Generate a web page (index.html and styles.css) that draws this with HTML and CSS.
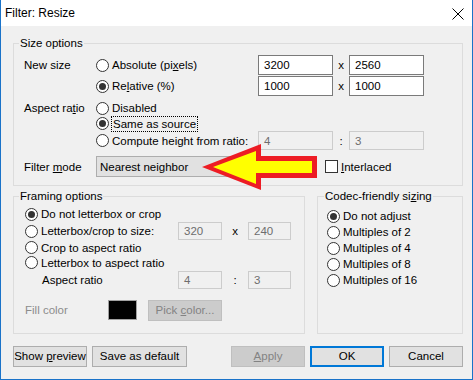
FILE: index.html
```html
<!DOCTYPE html>
<html lang="en">
<head>
<meta charset="utf-8">
<title>Filter: Resize</title>
<link rel="stylesheet" href="styles.css">
</head>
<body>
<div class="window">
  <div class="titlebar">
    <span class="title">Filter: Resize</span>
    <svg class="close" width="12" height="12" viewBox="0 0 12 12"><path d="M0.5 0.5L11.5 11.5M11.5 0.5L0.5 11.5" stroke="#000" stroke-width="1" fill="none"/></svg>
  </div>
  <div class="content">
    <div class="group size">
      <div class="group-title">Size options</div>
      <div class="rows">
        <div class="row r1">
          <span class="label">New size</span>
          <span class="opt"><span class="radio"></span><span>Absolute (pi<u>x</u>els)</span></span>
          <span class="field">3200</span><span class="sep">x</span><span class="field">2560</span>
        </div>
        <div class="row r2">
          <span class="label"></span>
          <span class="opt"><span class="radio on"></span><span>Re<u>l</u>ative (%)</span></span>
          <span class="field">1000</span><span class="sep">x</span><span class="field">1000</span>
        </div>
        <div class="row r3">
          <span class="label">Aspect ra<u>t</u>io</span>
          <span class="opt"><span class="radio"></span><span>Disabled</span></span>
        </div>
        <div class="row r4">
          <span class="label"></span>
          <span class="opt"><span class="radio on"></span><span class="focus">Same as source</span></span>
        </div>
        <div class="row r5">
          <span class="label"></span>
          <span class="opt"><span class="radio"></span><span>Compute height from ratio:</span></span>
          <span class="field off">4</span><span class="sep">:</span><span class="field off">3</span>
        </div>
        <div class="row r6">
          <span class="label">Filter <u>m</u>ode</span>
          <span class="select">Nearest neighbor</span>
          <span class="check"></span><span><u>I</u>nterlaced</span>
        </div>
      </div>
    </div>

    <div class="lower">
      <div class="group framing">
        <div class="group-title">Framing options</div>
        <div class="rows">
          <div class="row f1"><span class="opt"><span class="radio on"></span><span>Do not letterbox or crop</span></span></div>
          <div class="row f2">
            <span class="opt"><span class="radio"></span><span>Letterbox/crop to size:</span></span>
            <span class="field off w44">320</span><span class="sep wide">x</span><span class="field off w43">240</span>
          </div>
          <div class="row f3"><span class="opt"><span class="radio"></span><span>Crop to aspect ratio</span></span></div>
          <div class="row f4"><span class="opt"><span class="radio"></span><span>Letterbox to aspect ratio</span></span></div>
          <div class="row f5">
            <span class="opt sub">Aspect ratio</span>
            <span class="field off w44">4</span><span class="sep wide">:</span><span class="field off w43">3</span>
          </div>
          <div class="row f6">
            <span class="fill-label">Fill color</span>
            <span class="swatch"></span>
            <span class="btn off pick">Pick <u>c</u>olor...</span>
          </div>
        </div>
      </div>
      <div class="group codec">
        <div class="group-title">Codec-friendly si<u>z</u>ing</div>
        <div class="rows">
          <div class="row c"><span class="radio on"></span><span>Do not adjust</span></div>
          <div class="row c"><span class="radio"></span><span>Multiples of 2</span></div>
          <div class="row c"><span class="radio"></span><span>Multiples of 4</span></div>
          <div class="row c"><span class="radio"></span><span>Multiples of 8</span></div>
          <div class="row c"><span class="radio"></span><span>Multiples of 16</span></div>
        </div>
      </div>
    </div>

    <div class="buttons">
      <span class="btn">Show <u>p</u>review</span>
      <span class="btn wide">Save as default</span>
      <span class="btn off apply"><u>A</u>pply</span>
      <span class="btn default">OK</span>
      <span class="btn">Cancel</span>
    </div>
  </div>

  <svg class="arrow" width="473" height="380" viewBox="0 0 473 380">
    <polygon points="202,167 261,144 261,156 317,156 317,178 261,178 261,190" fill="#ed1c24"/>
    <polygon points="213,167 256,151 256,161 312,161 312,173 256,173 256,184" fill="#ffff00"/>
  </svg>
</div>
</body>
</html>
```

FILE: styles.css
```css
* {
    box-sizing: border-box;
}

html, body {
    margin: 0;
    padding: 0;
}

body {
    width: 473px;
    height: 380px;
    overflow: hidden;
    font-family: "Liberation Sans", Arial, sans-serif;
    font-size: 11.5px;
    color: #000;
    background: #fff;
}

u {
    text-underline-offset: 1px;
}

.window {
    position: relative;
    width: 473px;
    height: 380px;
    border: 1px solid #1a73c9;
    border-top: none;
    background: #f0f0f0;
}

.titlebar {
    height: 26px;
    background: #fff;
    display: flex;
    align-items: center;
    justify-content: space-between;
    padding: 0 8px 0 4px;
    font-size: 12px;
}

.close {
    display: block;
    margin-top: 1px;
}

.content {
    padding: 17px 9px 0 12px;
}

/* group boxes */
.group {
    border: 1px solid #dcdcdc;
}

.group-title {
    width: fit-content;
    height: 15px;
    line-height: 15px;
    margin: -8px 0 0 5px;
    padding: 0 1px;
    background: #f0f0f0;
}

.row {
    display: flex;
    align-items: center;
    white-space: nowrap;
}

.label {
    width: 72px;
    flex: none;
}

.opt {
    display: flex;
    align-items: center;
    width: 162px;
    flex: none;
}

.radio {
    position: relative;
    width: 13px;
    height: 13px;
    flex: none;
    border: 1px solid #333;
    border-radius: 50%;
    background: #fff;
    margin-right: 3px;
}

.radio.on::after {
    content: "";
    position: absolute;
    left: 2px;
    top: 2px;
    width: 7px;
    height: 7px;
    border-radius: 50%;
    background: #333;
}

.focus {
    outline: 1px dotted #000;
    outline-offset: 0;
    padding: 0 1px;
    line-height: 14px;
}

.field {
    width: 75px;
    height: 100%;
    flex: none;
    display: flex;
    align-items: center;
    padding-left: 5px;
    border: 1px solid #7a7a7a;
    background: #fff;
}

.field.off {
    border-color: #cccccc;
    background: #f0f0f0;
    color: #6d6d6d;
}

.sep {
    width: 16px;
    text-align: center;
    flex: none;
}

/* size options */
.size {
    width: 450px;
    height: 143px;
}

.size .rows {
    padding-left: 10px;
    margin-top: 4px;
}

.r1 { height: 20px; }
.r2 { height: 20px; margin-top: 1px; }
.r3 { height: 16px; margin-top: 4px; }
.r4 { height: 15px; }
.r5 { height: 19px; }
.r6 { height: 21px; margin-top: 6px; }

.select {
    width: 220px;
    height: 21px;
    display: flex;
    align-items: center;
    padding-left: 3px;
    border: 1px solid #adadad;
    background: #e1e1e1;
}

.check {
    width: 13px;
    height: 13px;
    border: 1px solid #333;
    background: #fff;
    margin: 0 3px 0 9px;
}

/* lower groups */
.lower {
    display: flex;
    gap: 12px;
    margin-top: 10px;
}

.framing {
    width: 292px;
    height: 138px;
}

.framing .rows {
    padding-left: 11px;
    margin-top: 2px;
}

.framing .opt {
    width: 153px;
}

.framing .opt.sub {
    padding-left: 17px;
}

.f1 { height: 16px; }
.f2 { height: 18px; }
.f3 { height: 15px; }
.f4 { height: 15px; }
.f5 { height: 18px; margin-top: 1px; }
.f6 { height: 20px; margin-top: 11px; }

.w44 { width: 44px; }
.w43 { width: 43px; }

.sep.wide {
    width: 26px;
}

.fill-label {
    width: 83px;
    color: #8c8c8c;
}

.swatch {
    width: 29px;
    height: 20px;
    border: 1px solid #a0a0a0;
    background: #000;
    box-shadow: inset 0 0 0 1px #000;
}

.pick {
    width: 84px;
    height: 20px;
    line-height: 18px;
    margin-left: 11px;
}

.codec {
    width: 146px;
    height: 138px;
}

.codec .group-title {
    margin-left: 6px;
}

.codec .rows {
    padding-left: 9px;
    margin-top: 4px;
}

.row.c {
    height: 16px;
}

/* buttons */
.buttons {
    display: flex;
    gap: 5px;
    margin-top: 12px;
}

.btn {
    width: 74px;
    height: 21px;
    line-height: 19px;
    flex: none;
    display: block;
    text-align: center;
    border: 1px solid #adadad;
    background: #e1e1e1;
    white-space: nowrap;
}

.btn.wide {
    width: 95px;
}

.btn.off {
    border-color: #bfbfbf;
    background: #cccccc;
    color: #838383;
}

.btn.apply {
    margin-left: auto;
}

.btn.default {
    border: 2px solid #0078d7;
    line-height: 17px;
}

.arrow {
    position: absolute;
    left: -1px;
    top: 0;
    pointer-events: none;
}
```
